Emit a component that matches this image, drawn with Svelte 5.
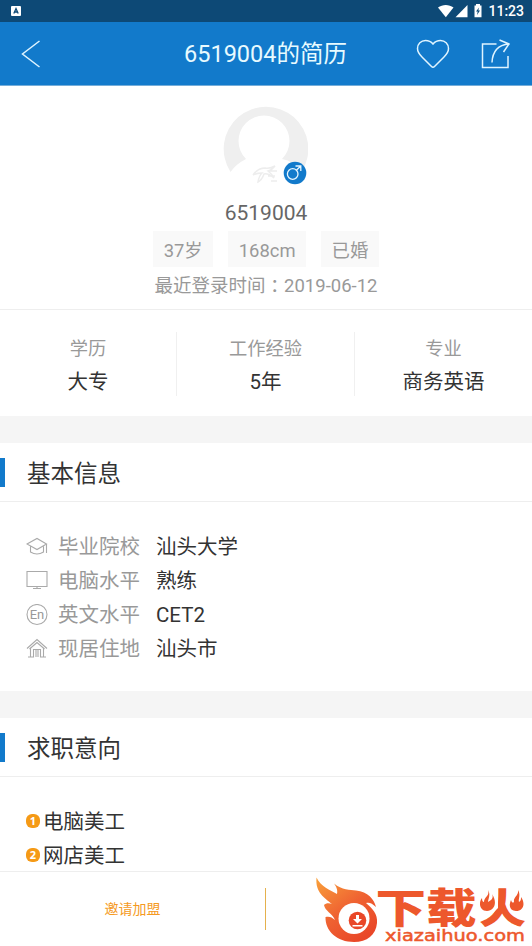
<script lang="ts">
	const name = '6519004';
	const tags = ['37岁', '168cm', '已婚'];
	const stats = [
		{ label: '学历', value: '大专' },
		{ label: '工作经验', value: '5年' },
		{ label: '专业', value: '商务英语' }
	];
	const info = [
		{ icon: 'school', label: '毕业院校', value: '汕头大学' },
		{ icon: 'computer', label: '电脑水平', value: '熟练' },
		{ icon: 'english', label: '英文水平', value: 'CET2' },
		{ icon: 'home', label: '现居住地', value: '汕头市' }
	];
	const jobs = ['电脑美工', '网店美工'];
</script>

<div class="screen">
	<div class="status-bar">
		<svg class="app-badge" width="10" height="10" viewBox="0 0 10 10">
			<rect width="10" height="10" rx="1" fill="#fff" />
			<path d="M2.8 7.5 5 2.5l2.2 5M3.6 6h2.8" fill="none" stroke="#0d4976" stroke-width="1.3" />
		</svg>
		<div class="status-right">
			<svg width="46" height="14" viewBox="0 0 46 14" fill="#fff">
				<path d="M0 3.6C4.5 0 11 0 15.5 3.6L7.8 13.2Z" />
				<path d="M17.5 13.2 29.5 1v12.2Z" />
				<path d="M36.5 1.5h1.5V0h4v1.5h1.5v11.7h-7Z" />
				<path d="m41 3.5-3 4h1.7l-.7 3.5 3-4.5h-1.7Z" fill="#0d4976" />
			</svg>
			<span class="clock">11:23</span>
		</div>
	</div>

	<header>
		<svg class="back" width="20" height="28" viewBox="0 0 20 28">
			<path d="M18.5 1 1.5 14l17 13" />
		</svg>
		<h1>{name}的简历</h1>
		<div class="actions">
			<svg width="34" height="30" viewBox="0 0 34 30">
				<path d="M17 5C14.5 2 12 1.5 9.5 1.5 5 1.5 1.5 5 1.5 9.5c0 4 2 6 4.5 8.5l9.5 9.5q1.5 1.5 3 0L28 18c2.5-2.5 4.5-4.5 4.5-8.5 0-4.5-3.5-8-8-8-2.5 0-5 .5-7.5 3.5Z" />
			</svg>
			<svg width="30" height="30" viewBox="0 0 30 30">
				<path d="M15.5 5H1.5v23.5h25.5V17" />
				<path d="M11 23.5C11.5 13 16 6 28 5M18.5 1 28 5 22.5 13" />
			</svg>
		</div>
	</header>

	<section class="profile">
		<div class="avatar">
			<svg width="86" height="86" viewBox="0 0 86 86">
				<path d="M8.5 68A42.3 42.3 0 1 1 79.5 68Q72 57 60 55A25.5 25.5 0 1 0 24 55Q14 60 8.5 68Z" fill="#efefef" />
				<path d="M31 71q5-7 12-7 5 1 10-2-3 4-7 5 4 3 6 7-6-5-10-4-2 6-6 8 1-6 4-9-5 0-9 2M47 67h8M46 72h7M49 77h6" fill="none" stroke="#ededed" stroke-width="1.5" />
			</svg>
			<svg class="gender" width="24" height="24" viewBox="0 0 24 24">
				<circle cx="12" cy="12" r="11.3" fill="#127acb" />
				<g fill="none" stroke="#e6f6ff" stroke-width="1.3">
					<circle cx="9.7" cy="13" r="5.3" />
					<path d="m13.2 9.5 4.5-4.5M12.5 5h5.3v5" />
				</g>
			</svg>
		</div>
		<div class="name">{name}</div>
		<div class="tags">
			{#each tags as tag}
				<span class="tag">{tag}</span>
			{/each}
		</div>
		<div class="login">最近登录时间<span class="colon">：</span>2019-06-12</div>
	</section>

	<section class="stats">
		{#each stats as stat}
			<div class="stat">
				<div class="stat-label">{stat.label}</div>
				<div class="stat-value">{stat.value}</div>
			</div>
		{/each}
	</section>

	<section class="block">
		<h2>基本信息</h2>
		<ul class="info">
			{#each info as row}
				<li>
					<svg class="icon" width="22" height="22" viewBox="0 0 22 22">
						{#if row.icon === 'school'}
							<path d="M1 8 11 2.5 20.5 8 11 13.5ZM4.5 10.5V16q6.5 4 13 0v-5.5M20.5 8V17" />
						{:else if row.icon === 'computer'}
							<path d="M1 1.5h20v15H1ZM11 16.5v2M7 18.5h8" />
						{:else if row.icon === 'english'}
							<circle cx="11" cy="10.5" r="10" />
							<text x="11" y="15" text-anchor="middle">En</text>
						{:else}
							<path d="M1 10.5 11 1.5l10 9M3.5 11 11 4.5l7.5 6.5M4.5 10.5V19M17.5 10.5V19M2 19h5.5v-7.5h7V19H20M10 11.5V19M12 11.5V19" />
						{/if}
					</svg>
					<span class="label">{row.label}</span>
					<span class="value">{row.value}</span>
				</li>
			{/each}
		</ul>
	</section>

	<section class="block jobs-block">
		<h2>求职意向</h2>
		<ul class="jobs">
			{#each jobs as job, i}
				<li><span class="num">{i + 1}</span>{job}</li>
			{/each}
		</ul>
	</section>

	<footer>
		<div class="invite">邀请加盟</div>
		<div class="invite"></div>
	</footer>

	<svg class="brand" width="218" height="72" viewBox="314 874 218 72">
		<defs>
			<linearGradient id="flame" x1="0" y1="0" x2="0.7" y2="1">
				<stop offset="0" stop-color="#f9a13a" />
				<stop offset="0.55" stop-color="#ef6232" />
				<stop offset="1" stop-color="#e94728" />
			</linearGradient>
		</defs>
		<path d="M316.5 877.5C321 887 330 890 337 894C338 890 336 886 334 883.5C342 890 350 890 356 890.5C368 892 374 899 376 907C372 903 369 902 366 903C372 908 378 914 377 923C376 935 367 942 354 942C337 942 325 931 325.5 917C329 916 332 917 335 920C332 913 325 911 324 905C326 903 329 903 332 904C325 898 315 893 316.5 877.5Z" fill="url(#flame)" />
		<circle cx="354" cy="918.5" r="15.5" fill="#fff" />
		<circle cx="357.5" cy="920.5" r="8.8" fill="#e94728" />
		<path d="M356 915h3v4h3l-4.5 4.5-4.5-4.5h3ZM352.5 925h10v1.5h-10Z" fill="#fff" />
		<text class="brand-name" x="375.5" y="922.5" textLength="101" lengthAdjust="spacingAndGlyphs">下载</text>
		<text class="brand-name" x="479" y="922.5" textLength="47" lengthAdjust="spacingAndGlyphs">火</text>
		<!-- the side strokes of the last character are little flames -->
		<path d="M478 886h20v22l-5 5h-15ZM508 886h20v26h-14l-6-4Z" fill="#fff" />
		<path d="M488 890C491 895 488 899 488 902L491 900C493 898 493 896 492 894C498 903 494 911 487 911C480 911 478 903 482 898C482 901 483 902 484 902C484 897 490 896 488 890ZM518 890C521 895 518 899 519 902C521 901 521 899 521 897C526 904 523 911 516 911C511 911 508 907 511 900C512 903 513 903 514 902C513 897 519 896 518 890Z" fill="#ed582c" />
		<text class="brand-url" x="385" y="941" textLength="140" lengthAdjust="spacingAndGlyphs">xiazaihuo.com</text>
	</svg>
</div>

<style>
	:global(body) {
		margin: 0;
		background: #fff;
	}

	.screen {
		position: relative;
		display: flex;
		flex-direction: column;
		width: 532px;
		height: 946px;
		overflow: hidden;
		background: #fff;
		color: #333;
		font-family: Roboto, 'Noto Sans CJK SC', sans-serif;
	}

	.status-bar {
		display: flex;
		flex: none;
		align-items: center;
		justify-content: space-between;
		height: 22px;
		padding: 0 8px 0 11px;
		background: #0d4976;
	}

	.status-right {
		display: flex;
		align-items: center;
		gap: 4px;
	}

	.clock {
		color: #fff;
		font-size: 14px;
		font-weight: 500;
		line-height: 22px;
	}

	header {
		display: grid;
		flex: none;
		grid-template-columns: 1fr auto 1fr;
		align-items: center;
		box-sizing: border-box;
		height: 64px;
		padding: 0 21px 0 20px;
		border-bottom: 1px solid #75add9;
		background: #127acb;
	}

	header svg {
		fill: none;
		stroke: #dff4ff;
		stroke-width: 1.5;
	}

	.back {
		margin-left: 1px;
	}

	h1 {
		margin: 0;
		color: #e8faff;
		font-size: 23.5px;
		font-weight: 400;
		line-height: 64px;
	}

	.actions {
		display: flex;
		justify-content: flex-end;
		gap: 31px;
	}

	.profile {
		display: flex;
		flex: none;
		flex-direction: column;
		align-items: center;
		box-sizing: border-box;
		height: 224px;
		padding-top: 18px;
		border-bottom: 1px solid #eee;
	}

	.avatar {
		position: relative;
		height: 86px;
		margin-right: 2px;
	}

	.gender {
		position: absolute;
		right: 1px;
		bottom: 5px;
	}

	.name {
		margin-top: 10px;
		color: #666;
		font-size: 21px;
		line-height: 26px;
	}

	.tags {
		display: flex;
		gap: 15px;
		margin-top: 5px;
	}

	.tag {
		height: 36px;
		padding: 0 10.5px;
		background: #f9f9f9;
		color: #999;
		font-size: 18.4px;
		line-height: 39px;
	}

	.login {
		color: #999;
		font-size: 18.5px;
		line-height: 39px;
	}

	.colon {
		position: relative;
		top: 1px;
		font-family: 'Noto Sans CJK TC', sans-serif;
		line-height: 1;
	}

	.stats {
		display: grid;
		flex: none;
		grid-template-columns: 177px 178px 177px;
		height: 64px;
		padding: 22px 0 20px;
		text-align: center;
	}

	.stat {
		box-sizing: border-box;
		height: 64px;
	}

	.stat:not(:last-child) {
		border-right: 1px solid #f0f0f0;
	}

	.stat-label {
		color: #999;
		font-size: 18.3px;
		line-height: 34px;
	}

	.stat-value {
		font-size: 20.5px;
		line-height: 33px;
	}

	.block {
		flex: none;
		box-sizing: border-box;
		height: 275px;
		border-top: 27px solid #f5f5f5;
	}

	h2 {
		display: flex;
		align-items: center;
		height: 58px;
		margin: 0;
		border-bottom: 1px solid #eee;
		font-size: 23.5px;
		font-weight: 400;
	}

	h2::before {
		width: 5px;
		height: 29px;
		margin-right: 22px;
		background: #127acb;
		content: '';
	}

	ul {
		margin: 0;
		padding: 0;
		list-style: none;
	}

	li {
		display: flex;
		align-items: center;
		height: 34px;
		font-size: 20.5px;
		line-height: 34px;
	}

	.info {
		padding: 28px 26px 0;
	}

	.icon {
		fill: none;
		stroke: #aaa;
		stroke-width: 1.1;
	}

	.icon text {
		fill: #999;
		stroke: none;
		font-size: 13px;
	}

	.label {
		margin: 0 16px 0 10px;
		color: #999;
	}

	.jobs-block {
		height: 180px;
		overflow: hidden;
	}

	.jobs {
		padding: 28px 26px 0;
	}

	.num {
		width: 14px;
		height: 14px;
		margin: -2px 3px 0 0;
		border-radius: 6px;
		background: #f59a16;
		color: #fff;
		font-family: 'Noto Sans', sans-serif;
		font-size: 11px;
		font-weight: 700;
		line-height: 14px;
		text-align: center;
	}

	footer {
		display: grid;
		flex: none;
		grid-template-columns: 1fr 1fr;
		align-items: center;
		height: 74px;
		border-top: 1px solid #eee;
		background: #fff;
	}

	.invite {
		height: 42px;
		color: #f59a22;
		font-size: 14px;
		line-height: 42px;
		text-align: center;
	}

	.invite:first-child {
		border-right: 1px solid #e5b14d;
	}

	.brand {
		position: absolute;
		right: 0;
		bottom: 0;
	}

	.brand-name {
		fill: #ed582c;
		font-family: 'Noto Sans CJK SC', sans-serif;
		font-size: 41px;
		font-weight: 900;
	}

	.brand-url {
		fill: #ed582c;
		font-family: 'DejaVu Sans', sans-serif;
		font-size: 16px;
		stroke: #ed582c;
		stroke-width: 0.5;
	}
</style>
